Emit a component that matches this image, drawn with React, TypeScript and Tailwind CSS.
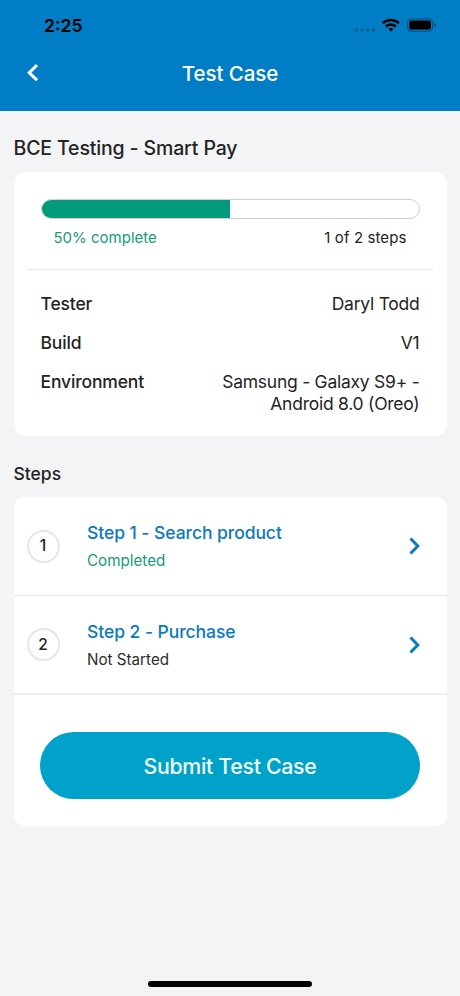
import React from 'react';

interface Step {
  title: string;
  status: string;
  done: boolean;
}

const steps: Step[] = [
  { title: 'Step 1 - Search product', status: 'Completed', done: true },
  { title: 'Step 2 - Purchase', status: 'Not Started', done: false },
];

const details = [
  { label: 'Tester', value: 'Daryl Todd' },
  { label: 'Build', value: 'V1' },
  { label: 'Environment', value: 'Samsung - Galaxy S9+ - Android 8.0 (Oreo)' },
];

const StatusBar: React.FC = () => (
  <div className="flex h-[50px] items-center justify-between pl-11 pr-6 text-black">
    <span className="pt-0.5 text-[17.5px] font-semibold leading-5">2:25</span>
    <svg width="82" height="16" viewBox="0 0 82 16">
      <g fill="#000" fillOpacity="0.3">
        <circle cx="2.3" cy="12.8" r="1.6" />
        <circle cx="8.1" cy="12.8" r="1.6" />
        <circle cx="13.9" cy="12.8" r="1.6" />
        <circle cx="19.7" cy="12.8" r="1.6" />
      </g>
      <g fill="none" stroke="#000" strokeWidth="2.5">
        <path d="M28.8 6.2a11.5 11.5 0 0 1 16 0" />
        <path d="M31.8 9.5a7.2 7.2 0 0 1 10 0" />
      </g>
      <path d="M36.8 14.4l-2.5-2.6a3.7 3.7 0 0 1 5 0z" />
      <rect x="53.5" y="1.8" width="25" height="12.4" rx="3.6" fill="none" stroke="#000" strokeOpacity="0.4" />
      <rect x="55" y="3.4" width="22" height="9.2" rx="2" />
      <path d="M80 6v4c1.1-.4 1.6-1.2 1.6-2s-.5-1.6-1.6-2z" fillOpacity="0.45" />
    </svg>
  </div>
);

const Header: React.FC = () => (
  <header className="h-[111px] bg-[#007dc5]">
    <StatusBar />
    <div className="grid h-[46px] grid-cols-[1fr_auto_1fr] items-center text-white">
      <button className="pl-[26px]" aria-label="Back">
        <svg width="13" height="18" viewBox="0 0 13 18" fill="none" stroke="currentColor" strokeWidth="3">
          <path d="M11 1.2L3.200 8.700l7.800 7.500" />
        </svg>
      </button>
      <h1 className="pt-0.5 text-[20.5px] font-medium tracking-[-0.05px]">Test Case</h1>
      <span />
    </div>
  </header>
);

const StepRow: React.FC<{ step: Step; last: boolean; index: number }> = ({ step, last, index }) => (
  <div className={`flex h-[99px] items-center pl-[13px] pr-[26px] ${last ? 'border-b-2 border-[#eeefef]' : 'border-b border-[#e3e5e6]'}`}>
    <div className="flex size-[33px] items-center justify-center rounded-full border-2 border-[#e6e6e7] text-[15.5px] font-medium text-[#222]">
      {index + 1}
    </div>
    <div className="ml-[27.5px] flex-1 pt-0.5">
      <div className="text-[17.5px] font-medium leading-6 tracking-[-0.06px] text-[#0a79bd]">{step.title}</div>
      <div className={`mt-1 text-[15.2px] leading-6 ${step.done ? 'text-[#149b78]' : 'text-[#2c2c2c]'}`}>{step.status}</div>
    </div>
    <svg width="12" height="18" viewBox="0 0 12 18" fill="none" stroke="#0a79bd" strokeWidth="3">
      <path d="M1.500 1.500L8.800 9l-7.300 7.500" />
    </svg>
  </div>
);

export default function App() {
  return (
    <div className="flex h-[996px] w-[460px] flex-col bg-[#f2f4f6] font-['Inter',sans-serif] text-[#242424]">
      <Header />
      <main className="flex-1 px-[13.5px]">
        <h2 className="mt-[25px] text-[19.5px] font-medium leading-6 tracking-[-0.14px]">BCE Testing - Smart Pay</h2>

        <section className="mt-3 h-[264px] rounded-[11px] bg-white px-[13px] pt-[27px]">
          <div className="px-3.5">
            <div className="h-5 overflow-hidden rounded-full border border-[#cfcfcf] bg-white">
              <div className="h-full w-1/2 bg-[#039a7b]" />
            </div>
            <div className="mt-2 flex justify-between px-[13px] text-[15px] leading-[22px]">
              <span className="text-[#149b78]">50% complete</span>
              <span className="tracking-[0.1px]">1 of 2 steps</span>
            </div>
          </div>
          <div className="mt-5 border-t border-[#e8e9e9]" />
          <dl className="mt-[23px] flex flex-col gap-[18px] px-3.5 text-[17.5px] leading-[21.2px]">
            {details.map((d) => (
              <div key={d.label} className="flex justify-between">
                <dt className="font-medium tracking-[-0.15px]">{d.label}</dt>
                <dd className="max-w-[206px] text-right tracking-[-0.25px]">{d.value}</dd>
              </div>
            ))}
          </dl>
        </section>

        <h3 className="mt-[26px] text-[17.5px] font-medium leading-6">Steps</h3>

        <section className="mt-[11px] h-[329px] rounded-[11px] bg-white">
          {steps.map((s, i) => (
            <StepRow key={s.title} step={s} index={i} last={i === steps.length - 1} />
          ))}
          <div className="px-[26.5px] pt-[37px]">
            <button className="h-[67px] w-full rounded-full bg-[#00a2c9] pt-0.5 text-[21.3px] font-medium tracking-[-0.3px] text-[#f2fdff]">
              Submit Test Case
            </button>
          </div>
        </section>
      </main>
      <div className="mx-auto mb-[9px] h-[6px] w-[164px] rounded-full bg-black" />
    </div>
  );
}
